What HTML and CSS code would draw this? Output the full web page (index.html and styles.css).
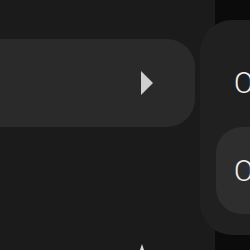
FILE: index.html
```html
<!DOCTYPE html>
<html lang="en">
<head>
  <meta charset="UTF-8">
  <meta name="viewport" content="width=device-width, initial-scale=1">
  <title>Menu</title>
  <link rel="stylesheet" href="styles.css">
</head>
<body>

<div class="screen">
  <section class="main-col">
    <div class="row-bar">
      <svg class="play-icon" width="12" height="24" viewBox="0 0 12 24">
        <path d="M0 0 L12 12 L0 24 Z" fill="#cfcfcf"/>
      </svg>
    </div>
    <div class="more-hint">
      <svg width="8" height="6" viewBox="0 0 8 6">
        <path d="M4 0 L6 6 L2 6 Z" fill="#d8d8d8"/>
      </svg>
    </div>
  </section>

  <aside class="side-col">
    <div class="side-panel">
      <div class="side-item">O</div>
      <div class="side-item side-item-active">O</div>
    </div>
  </aside>
</div>

</body>
</html>
```

FILE: styles.css
```css
body {
  margin: 0;
  padding: 0;
  background: #1b1b1b;
  font-family: Roboto, 'Liberation Sans', sans-serif;
}

.screen {
  display: flex;
  width: 250px;
  height: 250px;
  overflow: hidden;
}

.main-col {
  width: 200px;
  flex-shrink: 0;
  padding-top: 39px;
  box-sizing: border-box;
}

.row-bar {
  width: 195px;
  height: 88px;
  background: #2a2a2a;
  border-radius: 0 28px 28px 0;
  display: flex;
  align-items: center;
  padding-left: 141px;
  box-sizing: border-box;
}

.more-hint {
  margin-top: 117px;
  padding-left: 138px;
  line-height: 0;
}

.side-col {
  flex: 1;
  background: linear-gradient(to right, #1b1b1b 15px, #0b0b0b 15px);
}

.side-panel {
  margin-top: 20px;
  height: 215px;
  background: #202020;
  border-radius: 32px 0 0 32px;
  padding: 19px 0 0 16px;
  box-sizing: border-box;
  display: flex;
  flex-direction: column;
  gap: 1px;
}

.side-item {
  height: 87px;
  display: flex;
  align-items: center;
  padding-left: 18px;
  color: #f2f2f2;
  font-size: 29px;
  font-weight: 300;
  border-radius: 26px 0 0 26px;
}

.side-item-active {
  background: #2e2e2e;
}
```
